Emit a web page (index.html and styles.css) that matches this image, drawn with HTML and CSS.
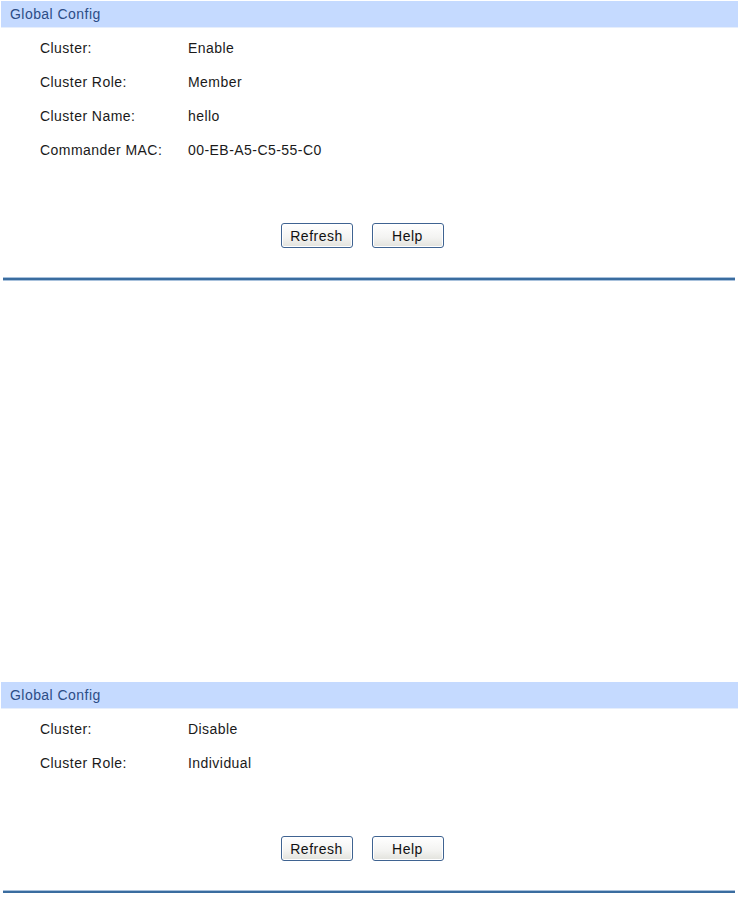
FILE: index.html
```html
<!DOCTYPE html>
<html>
<head>
<meta charset="utf-8">
<link rel="stylesheet" href="styles.css">
</head>
<body>
<section class="panel">
  <div class="panel-head">Global Config</div>
  <div class="rows">
    <div class="row"><span class="label">Cluster:</span><span class="value">Enable</span></div>
    <div class="row"><span class="label">Cluster Role:</span><span class="value">Member</span></div>
    <div class="row"><span class="label">Cluster Name:</span><span class="value">hello</span></div>
    <div class="row"><span class="label">Commander MAC:</span><span class="value">00-EB-A5-C5-55-C0</span></div>
  </div>
  <div class="actions">
    <button class="btn">Refresh</button>
    <button class="btn">Help</button>
  </div>
  <div class="rule"></div>
</section>

<section class="panel panel-second">
  <div class="panel-head">Global Config</div>
  <div class="rows">
    <div class="row"><span class="label">Cluster:</span><span class="value">Disable</span></div>
    <div class="row"><span class="label">Cluster Role:</span><span class="value">Individual</span></div>
  </div>
  <div class="actions">
    <button class="btn">Refresh</button>
    <button class="btn">Help</button>
  </div>
  <div class="rule"></div>
</section>
</body>
</html>
```

FILE: styles.css
```css
html, body {
  margin: 0;
  padding: 0;
  background: #ffffff;
}
body {
  font-family: "Liberation Sans", Arial, sans-serif;
  font-size: 14px;
  letter-spacing: 0.45px;
  color: #1a1a1a;
  width: 738px;
}
.panel {
  padding-top: 1px;
}
.panel-second {
  margin-top: 401px;
}
.panel-head {
  margin-left: 1px;
  height: 27px;
  line-height: 27px;
  background: #c5daff;
  color: #2c4d86;
  padding-left: 9px;
  font-size: 14px;
  border-bottom: 1px solid #e6eefc;
  box-sizing: border-box;
}
.rows {
  padding-top: 3px;
}
.row {
  display: flex;
  height: 34px;
  align-items: center;
  padding-left: 40px;
}
.label {
  width: 148px;
}
.actions {
  margin-top: 56px;
  display: flex;
  justify-content: center;
  gap: 19px;
  padding-right: 14px;
}
.btn {
  width: 72px;
  height: 25px;
  padding: 0;
  font-family: "Liberation Sans", Arial, sans-serif;
  font-size: 14px;
  letter-spacing: 0.5px;
  color: #111;
  border: 1px solid #3f6391;
  border-radius: 3px;
  background: linear-gradient(#ffffff, #f3f3f1 60%, #e2e2dc);
  box-shadow: inset 0 0 0 1px #ffffff;
}
.rule {
  margin: 30px 3px 0 3px;
  height: 2px;
  background: #3a6c9f;
  box-shadow: 0 -1px 0 #a8c1dc, 0 1px 0 #a8c1dc;
}
```
